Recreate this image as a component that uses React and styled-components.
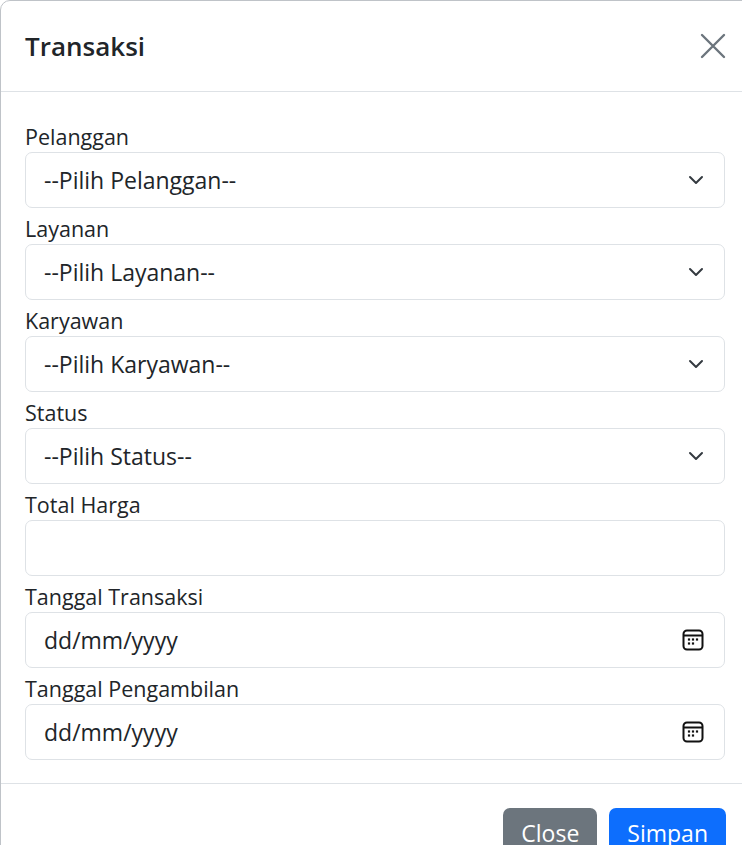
import React from 'react';
import styled, { createGlobalStyle } from 'styled-components';

const Global = createGlobalStyle`
  *, *::before, *::after { box-sizing: border-box; }
  body { margin: 0; background: #fff; font-family: "Open Sans", "Noto Sans", sans-serif; color: #212529; overflow: hidden; }
`;

const Modal = styled.div`
  width: 780px;
  border: 1px solid #bfc3c8;
  border-radius: 10px;
  background: #fff;
`;

const Header = styled.div`
  height: 91px;
  display: flex;
  align-items: center;
  justify-content: space-between;
  padding: 0 53px 0 24px;
  border-bottom: 1px solid #dee2e6;
`;

const Title = styled.h5`
  margin: 0;
  font-size: 26px;
  font-weight: 600;
`;

const CloseX = styled.button`
  border: 0;
  background: none;
  padding: 0;
  width: 26px;
  height: 26px;
  display: flex;
`;

const Body = styled.div`
  padding: 27px 16px 20px 24px;
  width: 740px;
`;

const Label = styled.label`
  display: block;
  font-size: 21.5px;
  line-height: 36px;
  height: 33px;
`;

const Field = styled.div`
  height: 56px;
  border: 1px solid #dee2e6;
  border-radius: 7px;
  display: flex;
  align-items: center;
  justify-content: space-between;
  padding: 0 20px 0 18px;
  font-size: 23px;
  margin-bottom: 3px;
  color: ${p => (p.$empty ? 'transparent' : '#212529')};
`;

const Footer = styled.div`
  border-top: 1px solid #dee2e6;
  padding: 24px 16px 24px 0;
  width: 741px;
  display: flex;
  justify-content: flex-end;
  gap: 12px;
`;

const Btn = styled.button`
  height: 50px;
  border: 0;
  border-radius: 7px;
  padding: 0 18px;
  font-size: 23px;
  font-family: inherit;
  color: #fff;
  background: ${p => p.$bg};
`;

const Chevron = () => (
  <svg width="16" height="16" viewBox="0 0 16 16" fill="none" stroke="#343a40" strokeWidth="2" strokeLinecap="round" strokeLinejoin="round">
    <path d="M2 5l6 6 6-6" />
  </svg>
);

const Cal = () => (
  <svg width="22" height="22" viewBox="0 0 22 22" fill="none">
    <rect x="1.5" y="1.5" width="19" height="19" rx="3.5" stroke="#111" strokeWidth="2" />
    <path d="M2 6.5h18" stroke="#111" strokeWidth="2" />
    {[[7,10.5],[11,10.5],[15,10.5],[7,14.5],[11,14.5]].map(([x,y]) => (
      <rect key={x+'-'+y} x={x-1.1} y={y-1.1} width="2.2" height="2.2" fill="#111" />
    ))}
  </svg>
);

const fields = [
  ['Pelanggan', '--Pilih Pelanggan--', 'select'],
  ['Layanan', '--Pilih Layanan--', 'select'],
  ['Karyawan', '--Pilih Karyawan--', 'select'],
  ['Status', '--Pilih Status--', 'select'],
  ['Total Harga', '', 'text'],
  ['Tanggal Transaksi', 'dd/mm/yyyy', 'date'],
  ['Tanggal Pengambilan', 'dd/mm/yyyy', 'date'],
];

export default function App() {
  return (
    <>
      <Global />
      <Modal>
        <Header>
          <Title>Transaksi</Title>
          <CloseX aria-label="Close">
            <svg width="26" height="26" viewBox="0 0 26 26" stroke="#6c757d" strokeWidth="2.4" strokeLinecap="round">
              <path d="M2 2l22 22M24 2L2 24" />
            </svg>
          </CloseX>
        </Header>
        <Body>
          {fields.map(([label, value, kind]) => (
            <div key={label}>
              <Label>{label}</Label>
              <Field $empty={!value}>
                <span>{value || '.'}</span>
                {kind === 'select' && <Chevron />}
                {kind === 'date' && <Cal />}
              </Field>
            </div>
          ))}
        </Body>
        <Footer>
          <Btn $bg="#6c757d">Close</Btn>
          <Btn $bg="#0d6efd">Simpan</Btn>
        </Footer>
      </Modal>
    </>
  );
}
